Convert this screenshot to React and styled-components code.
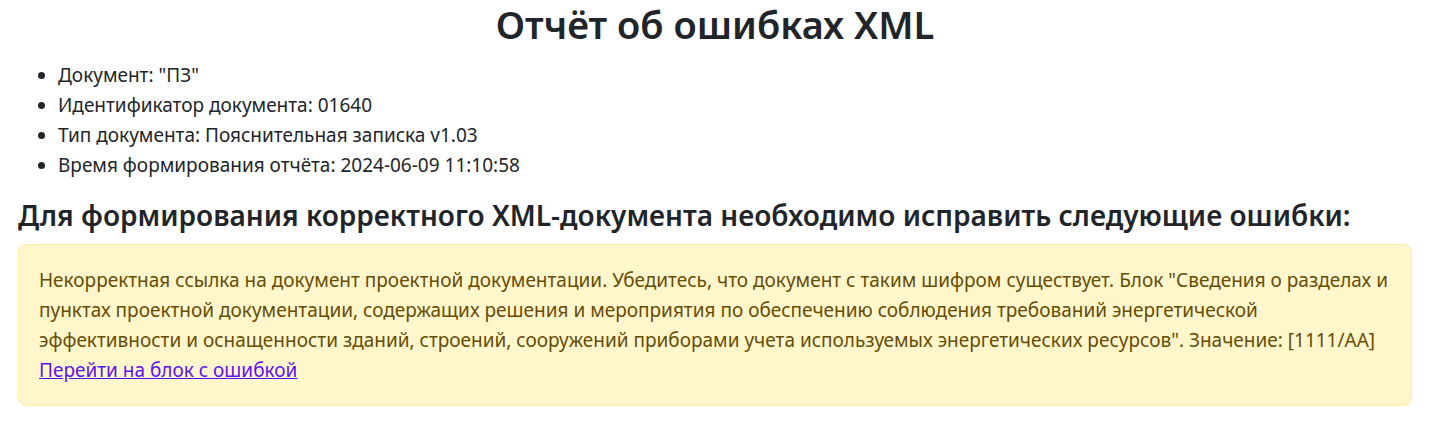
import React from "react";
import styled, { createGlobalStyle } from "styled-components";

const Global = createGlobalStyle`
  html, body { margin: 0; padding: 0; background: #fff; }
  body {
    font-family: "Noto Sans", "Open Sans", sans-serif;
    font-size: 19px;
    line-height: 30px;
    color: #212529;
  }
`;

const Page = styled.div`
  padding: 0 19px 0 18px;
`;

const Title = styled.h1`
  margin: 0 0 12px;
  text-align: center;
  font-size: 38px;
  line-height: 48px;
  font-weight: 600;
`;

const InfoList = styled.ul`
  margin: 0 0 18px;
  padding-left: 40px;
`;

const InfoItem = styled.li``;

const Subtitle = styled.h2`
  margin: 0 0 12px;
  font-size: 28px;
  line-height: 34px;
  font-weight: 600;
`;

const Alert = styled.div`
  background: #fff6cc;
  border: 1px solid #ffeca8;
  border-radius: 8px;
  color: #664d03;
  padding: 20px 20px 20px;
`;

const Message = styled.div``;

const Link = styled.a`
  color: #5b13f0;
  text-decoration: underline;
`;

export default function App() {
  return (
    <>
      <Global />
      <Page>
        <Title>Отчёт об ошибках XML</Title>
        <InfoList>
          <InfoItem>Документ: "ПЗ"</InfoItem>
          <InfoItem>Идентификатор документа: 01640</InfoItem>
          <InfoItem>Тип документа: Пояснительная записка v1.03</InfoItem>
          <InfoItem>Время формирования отчёта: 2024-06-09 11:10:58</InfoItem>
        </InfoList>
        <Subtitle>Для формирования корректного XML-документа необходимо исправить следующие ошибки:</Subtitle>
        <Alert>
          <Message>
            Некорректная ссылка на документ проектной документации. Убедитесь, что документ с таким шифром существует. Блок "Сведения о разделах и пунктах проектной документации, содержащих решения и мероприятия по обеспечению соблюдения требований энергетической эффективности и оснащенности зданий, строений, сооружений приборами учета используемых энергетических ресурсов". Значение: [1111/AA]
          </Message>
          <Link href="#">Перейти на блок с ошибкой</Link>
        </Alert>
      </Page>
    </>
  );
}
